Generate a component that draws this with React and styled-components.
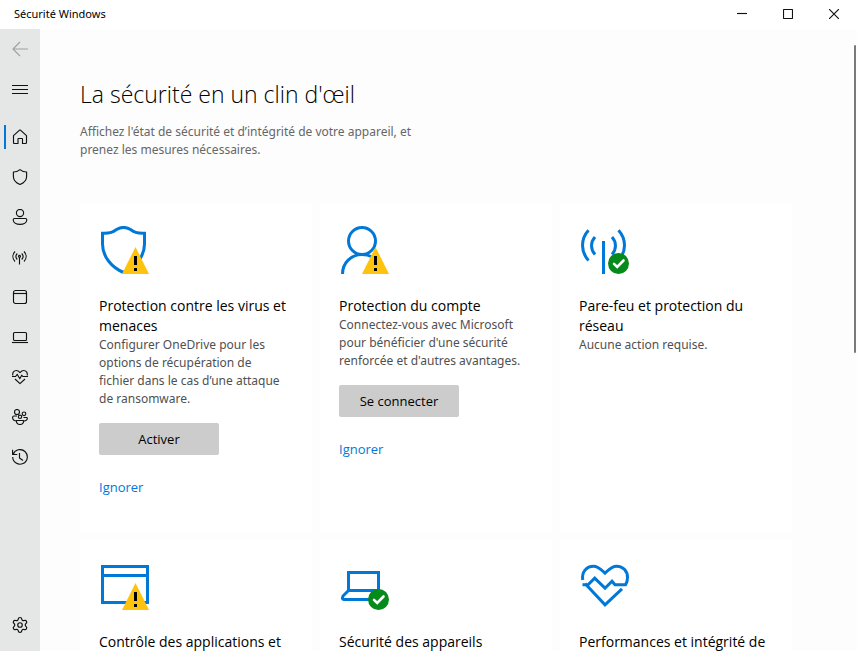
import React from 'react'
import styled, { createGlobalStyle } from 'styled-components'
import { Settings } from 'lucide-react'

const GlobalStyle = createGlobalStyle`
  * {
    box-sizing: border-box;
  }

  body {
    margin: 0;
    background: #fdfdfd;
    color: #111;
    font-family: 'Open Sans', 'Noto Sans', sans-serif;
    font-size: 12px;
  }

  button {
    border: 0;
    padding: 0;
    background: none;
    color: inherit;
    font: inherit;
  }
`

const Window = styled.div`
  display: flex;
  flex-direction: column;
  height: 100vh;
  overflow: hidden;
`

const TitleBar = styled.header`
  display: flex;
  flex: none;
  align-items: center;
  justify-content: space-between;
  height: 29px;
  padding: 0 0 2px 14px;
  background: #fff;
`

const WindowTitle = styled.span`
  font-family: 'Noto Sans', sans-serif;
  font-size: 11px;
  color: #000;
`

const WindowControls = styled.div`
  display: flex;
`

const ControlButton = styled.button`
  display: flex;
  align-items: center;
  justify-content: center;
  width: 46px;
  height: 26px;
`

const Body = styled.div`
  display: flex;
  flex: 1;
  min-height: 0;
`

const Sidebar = styled.nav`
  display: flex;
  flex: none;
  flex-direction: column;
  width: 40px;
  padding-bottom: 6px;
  background: #e5e7e6;
`

const NavGroup = styled.div`
  display: flex;
  flex: 1;
  flex-direction: column;
  padding-top: 8px;
`

const NavButton = styled.button`
  position: relative;
  display: flex;
  flex: none;
  align-items: center;
  justify-content: center;
  height: 40px;
  color: ${(p) => (p.disabled ? '#a0a2a1' : '#111')};

  &[aria-current='page']::before {
    content: '';
    position: absolute;
    left: 4px;
    top: 8px;
    width: 2px;
    height: 24px;
    background: #0078d7;
  }
`

const Main = styled.main`
  position: relative;
  flex: 1;
  overflow: hidden;
  padding: 47px 16px 0 40px;
`

const ScrollThumb = styled.div`
  position: absolute;
  top: 16px;
  right: 1px;
  width: 2px;
  height: 308px;
  border-radius: 1px;
  background: #7a7a7a;
`

const PageTitle = styled.h1`
  margin: 0;
  font-size: 23px;
  font-weight: 300;
  line-height: 36px;
  color: #000;
`

const Intro = styled.p`
  max-width: 360px;
  margin: 11px 0 45px;
  font-family: 'Noto Sans', sans-serif;
  line-height: 18px;
  color: #666;
`

const Cards = styled.div`
  display: grid;
  grid-template-columns: repeat(auto-fill, 232px);
  gap: 8px;
`

const Card = styled.section`
  display: flex;
  flex-direction: column;
  align-items: flex-start;
  min-height: 328px;
  padding: 22px 19px;
  background: #fff;
`

const CardTitle = styled.h2`
  margin: 22px 0 0;
  font-size: 14px;
  font-weight: 400;
  line-height: 20px;
  color: #000;
`

const CardText = styled.p`
  max-width: 188px;
  margin: 0;
  font-family: 'Noto Sans', sans-serif;
  line-height: 18px;
  color: #505050;
`

const ActionButton = styled.button`
  width: 120px;
  height: 32px;
  margin-top: 15px;
  border-radius: 2px;
  background: #ccc;
  font-size: 13px;
  color: #000;
`

const IgnoreLink = styled.a`
  margin-top: 22px;
  font-size: 13px;
  line-height: 20px;
  color: #0078d7;
  text-decoration: none;
`

const Glyph = ({ children, size = 16 }) => (
  <svg
    width={size}
    height={size}
    viewBox={`0 0 ${size} ${size}`}
    fill="none"
    stroke="currentColor"
    strokeWidth="1.15"
    strokeLinejoin="round"
    aria-hidden="true"
  >
    {children}
  </svg>
)

const BigIcon = ({ children }) => (
  <svg width="50" height="48" viewBox="-1 0 50 48" fill="none" stroke="#0078d7" strokeWidth="3" aria-hidden="true">
    {children}
  </svg>
)

const WarningBadge = () => (
  <g stroke="none">
    <path d="M35.5 21L49 48H22z" fill="#ffc20e" />
    <path d="M34 30h3v9h-3zM34 42h3v3h-3z" fill="#000" />
  </g>
)

const OkBadge = () => (
  <g stroke="none">
    <circle cx="38.5" cy="37.5" r="10.5" fill="#058a1c" />
    <path d="M34 37.8l3.2 3.2 6.3-6.5" stroke="#fff" strokeWidth="2.6" strokeLinecap="round" />
  </g>
)

const NAV_ITEMS = [
  {
    label: 'Accueil',
    icon: (
      <path d="M1.5 6.7L7.3 1.3q.7-.6 1.4 0l5.8 5.4v6.8q0 1-1 1h-3V10q0-.5-.5-.5H6.5Q6 9.500 6 10v4.500H2.500q-1 0-1-1z" />
    ),
  },
  {
    label: 'Protection contre les virus et menaces',
    icon: <path d="M8 .6C10 2.200 12 3 14.600 3v4.500c0 3.700-2.600 6.400-6.600 8-4-1.600-6.600-4.300-6.600-8V3C4 3 6 2.200 8 .6z" />,
  },
  {
    label: 'Protection du compte',
    icon: (
      <>
        <circle cx="8" cy="4" r="3.600" />
        <path d="M2.500 9.500h11q1.300 0 1.300 1.300c0 3-3.300 4.600-6.800 4.600s-6.800-1.600-6.800-4.600q0-1.300 1.300-1.300z" />
      </>
    ),
  },
  {
    label: 'Pare-feu et protection du réseau',
    icon: (
      <>
        <path d="M3 2.500C.2 5.500.2 9.500 3 12.500M5.300 4.500c-1.700 1.800-1.700 4.200 0 6M12 2.500c2.800 3 2.800 7 0 10M9.700 4.500c1.700 1.800 1.700 4.200 0 6M7.500 8.500v7" />
        <circle cx="7.500" cy="7.300" r="1" />
      </>
    ),
  },
  {
    label: 'Contrôle des applications et du navigateur',
    icon: (
      <>
        <rect x="1.500" y="1.500" width="13" height="13" rx="2" />
        <path d="M1.500 4.500h13" />
      </>
    ),
  },
  {
    label: 'Sécurité des appareils',
    icon: (
      <>
        <rect x="1.500" y="3.500" width="13" height="8" rx="1" />
        <path d="M0 13.500h16" />
      </>
    ),
  },
  {
    label: "Performances et intégrité de l'appareil",
    icon: (
      <>
        <path d="M.8 6.500C.2 3.500 2 1.500 4.300 1.500 6 1.500 7 2.400 8 3.600c1-1.200 2-2.100 3.700-2.100 2.300 0 4.100 2 3.500 5" />
        <path d="M0 7.500h3.600l1.600-2.200 2.600 4.400 1.900-3.500 1.100 1.300H16M3 10l5 4.600 5-4.600" />
      </>
    ),
  },
  {
    label: 'Options de contrôle parental',
    icon: (
      <>
        <circle cx="5" cy="3" r="2.500" />
        <circle cx="12" cy="4.800" r="1.800" />
        <circle cx="8" cy="7.800" r="1.700" />
        <path d="M5 7H2Q.6 7 .6 8.500C.6 10.500 2 11.700 4 12M11.500 8.500H15c1 1.800-.8 3.500-3 3.500" />
        <path d="M4.500 11.500h7c.3 2.400-1 4-3.500 4s-3.800-1.600-3.500-4z" />
      </>
    ),
  },
  {
    label: 'Historique de protection',
    icon: <path d="M.6.800v4.700h4.700M1.100 5.500A7.300 7.300 0 1 1 .7 8M7.500 4v5l3.500 2.500" />,
  },
]

const CARDS = [
  {
    title: 'Protection contre les virus et menaces',
    text: 'Configurer OneDrive pour les options de récupération de fichier dans le cas d’une attaque de ransomware.',
    action: 'Activer',
    icon: (
      <>
        <path d="M2.500 7.200c8 .3 10.500-1.200 14-3.700 4.500-2.700 9.500-2.700 14 0 3.500 2.500 6 4 14 3.700V18c0 13-9.500 23.500-21 28.500C12 41.500 2.500 31 2.500 18z" />
        <WarningBadge />
      </>
    ),
  },
  {
    title: 'Protection du compte',
    text: "Connectez-vous avec Microsoft pour bénéficier d'une sécurité renforcée et d'autres avantages.",
    action: 'Se connecter',
    icon: (
      <>
        <circle cx="22" cy="15" r="13.500" />
        <path d="M2.500 48C2.500 37 11 28.500 22 28.500c4 0 7.500 1 10.500 2.500" />
        <WarningBadge />
      </>
    ),
  },
  {
    title: 'Pare-feu et protection du réseau',
    text: 'Aucune action requise.',
    icon: (
      <>
        <path d="M8.500 4.200C.5 13 .5 25.500 8.500 34.500M15 11c-4.600 5-4.600 12.500 0 17.500M38.500 4.200c8 8.800 8 21.300 0 30.300M32 11c4.600 5 4.600 12.500 0 17.500M23.500 15v33" />
        <OkBadge />
      </>
    ),
  },
  {
    title: 'Contrôle des applications et du navigateur',
    icon: (
      <>
        <path d="M2.500 4.500h45v36h-45zM2.500 13.500h45" />
        <WarningBadge />
      </>
    ),
  },
  {
    title: 'Sécurité des appareils',
    icon: (
      <>
        <path d="M8.500 28.500v-18h30v18zM8.500 28.500l-5.500 5.500q-1.500 3.500 1 3.500h38" />
        <OkBadge />
      </>
    ),
  },
  {
    title: "Performances et intégrité de l'appareil",
    icon: (
      <path d="M2.700 18C1.500 10 6.500 4.200 13.500 4.200c5 0 7.500 3.300 11.500 7 4-3.700 6.500-7 11.500-7 7 0 11 5.300 11 11.300 0 3-.7 5.500-2 7.300H35l-3-3.600-7 7-10.300-10L8 22.800H2.500M5 21.500l20 21.300 17-16" />
    ),
  },
]

const App = () => {
  return (
    <Window>
      <GlobalStyle />
      <TitleBar>
        <WindowTitle>Sécurité Windows</WindowTitle>
        <WindowControls>
          <ControlButton aria-label="Réduire">
            <Glyph size={10}>
              <path d="M0 4.500h10" />
            </Glyph>
          </ControlButton>
          <ControlButton aria-label="Agrandir">
            <Glyph size={10}>
              <rect x=".5" y=".5" width="9" height="9" rx=".5" />
            </Glyph>
          </ControlButton>
          <ControlButton aria-label="Fermer">
            <Glyph size={10}>
              <path d="M0 0l10 10M10 0L0 10" />
            </Glyph>
          </ControlButton>
        </WindowControls>
      </TitleBar>
      <Body>
        <Sidebar>
          <NavButton aria-label="Retour" disabled>
            <Glyph>
              <path d="M16 8H1M8 1L1 8l7 7" />
            </Glyph>
          </NavButton>
          <NavButton aria-label="Menu">
            <Glyph>
              <path d="M0 4.500h16M0 8.500h16M0 12.500h16" />
            </Glyph>
          </NavButton>
          <NavGroup>
            {NAV_ITEMS.map((x, i) => (
              <NavButton key={x.label} aria-label={x.label} aria-current={i === 0 ? 'page' : undefined}>
                <Glyph>{x.icon}</Glyph>
              </NavButton>
            ))}
          </NavGroup>
          <NavButton aria-label="Paramètres">
            <Settings size={18} strokeWidth={1.6} />
          </NavButton>
        </Sidebar>
        <Main>
          <PageTitle>La sécurité en un clin d'œil</PageTitle>
          <Intro>Affichez l'état de sécurité et d’intégrité de votre appareil, et prenez les mesures nécessaires.</Intro>
          <Cards>
            {CARDS.map((x) => (
              <Card key={x.title}>
                <BigIcon>{x.icon}</BigIcon>
                <CardTitle>{x.title}</CardTitle>
                {x.text && <CardText>{x.text}</CardText>}
                {x.action && (
                  <>
                    <ActionButton>{x.action}</ActionButton>
                    <IgnoreLink href="#ignorer">Ignorer</IgnoreLink>
                  </>
                )}
              </Card>
            ))}
          </Cards>
          <ScrollThumb />
        </Main>
      </Body>
    </Window>
  )
}

export default App
